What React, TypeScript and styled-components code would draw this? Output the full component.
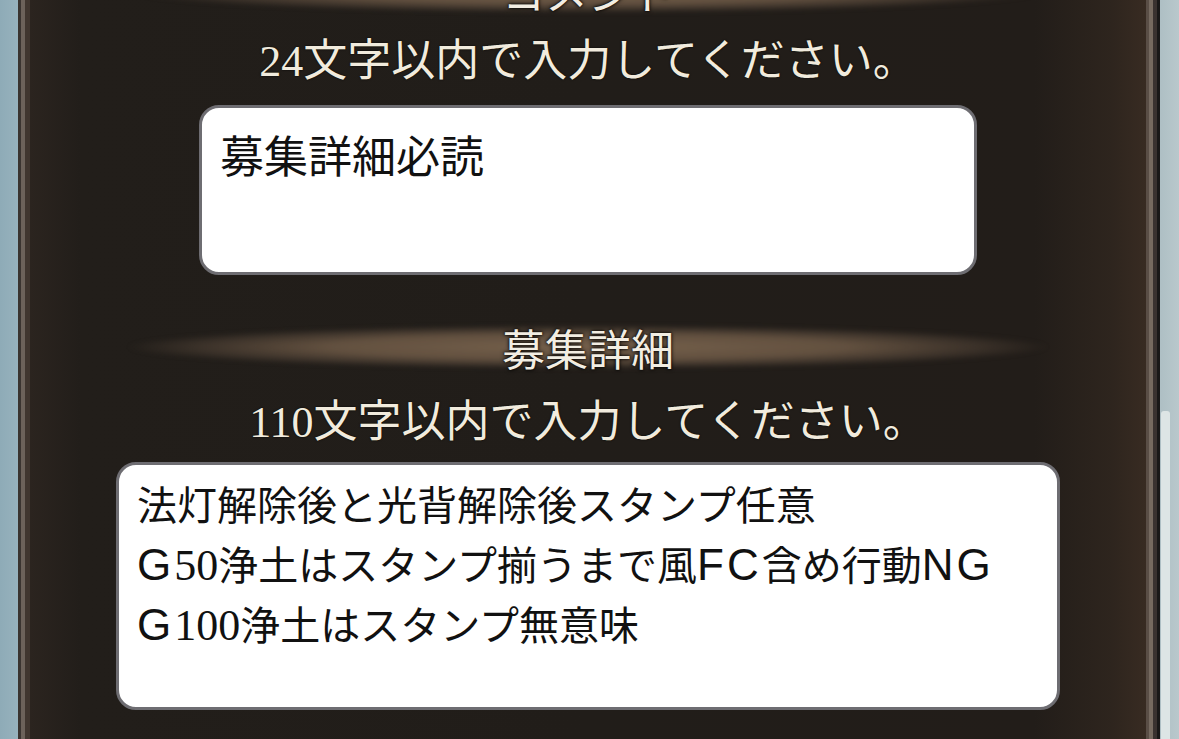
import styled, { createGlobalStyle } from "styled-components";

const GlobalStyle = createGlobalStyle`
  body {
    margin: 0;
    background: #9fb6bf;
  }
`;

const Page = styled.div`
  display: flex;
  width: 1179px;
  height: 739px;
  overflow: hidden;
`;

const LeftGutter = styled.div`
  width: 18px;
  background: linear-gradient(to right, #8eabb7, #97b2bd);
`;

const LeftEdge = styled.div`
  width: 12px;
  background: linear-gradient(
    to right,
    #3a3430 0 3px,
    #6c625a 3px 7px,
    #40362f 7px 12px
  );
`;

const RightEdge = styled.div`
  width: 14px;
  background: linear-gradient(
    to right,
    #5a4e46 0 3px,
    #766a60 3px 7px,
    #3a3230 7px 11px,
    #1a1818 11px 14px
  );
`;

const ScrollTrack = styled.div`
  width: 19px;
  padding-top: 411px;
  box-sizing: border-box;
  background: linear-gradient(to right, #aebfc4, #b9c8cc);
`;

const ScrollThumb = styled.div`
  width: 9px;
  height: 100%;
  margin-left: 1px;
  background: #dde5e5;
  border-radius: 3px 3px 0 0;
`;

const Panel = styled.main`
  flex: 1;
  display: flex;
  flex-direction: column;
  align-items: center;
  background: linear-gradient(
    to right,
    #2b241f 0,
    #221e1a 50px,
    #211d19 50%,
    #221d19 90%,
    #2e251e 97%,
    #382b22 100%
  );
  font-family: "Liberation Serif", "Noto Sans CJK JP", serif;
`;

const Column = styled.div`
  display: flex;
  flex-direction: column;
  align-items: center;
  margin-top: -37px;
`;

const Heading = styled.h2<{ $gap?: number }>`
  position: relative;
  width: 920px;
  height: 56px;
  margin: ${(p) => p.$gap ?? 0}px 0 0;
  text-align: center;
  line-height: 56px;
  font-family: "Noto Sans CJK JP", sans-serif;
  font-size: 43px;
  font-weight: 400;
  color: #f2ede2;
  text-shadow: 0 0 4px #000, 0 0 2px #000;

  &::before {
    content: "";
    position: absolute;
    left: 0;
    right: 0;
    top: 6px;
    height: 44px;
    border-radius: 50%;
    background: radial-gradient(
      ellipse at center,
      rgba(118, 97, 76, 1) 0%,
      rgba(104, 85, 67, 0.92) 40%,
      rgba(76, 63, 52, 0.6) 60%,
      rgba(40, 34, 30, 0) 71%
    );
    filter: blur(2px);
    z-index: 0;
  }

  span {
    position: relative;
    z-index: 1;
  }
`;

const Hint = styled.p<{ $gap: number }>`
  margin: ${(p) => p.$gap}px 0 0;
  height: 48px;
  line-height: 48px;
  font-size: 44px;
  color: #f1ebdd;
  text-shadow: 0 0 2px #000;
  white-space: nowrap;
`;

const Field = styled.div<{ $width: number; $height: number; $gap: number; $size: number; $line: number; $pad: number }>`
  box-sizing: border-box;
  width: ${(p) => p.$width}px;
  height: ${(p) => p.$height}px;
  margin-top: ${(p) => p.$gap}px;
  padding: ${(p) => p.$pad}px 18px 0;
  background: #fff;
  border: 3px solid #6e6d72;
  border-radius: 20px;
  font-family: "Noto Sans CJK JP", sans-serif;
  font-size: ${(p) => p.$size}px;
  line-height: ${(p) => p.$line}px;
  color: #111;
  white-space: nowrap;
`;

const Line = styled.div`
  height: 60px;
`;

// latin letters in the entry text are a wide grotesque, digits a serif
const Latin = styled.span`
  font-family: "Liberation Sans", sans-serif;
  font-size: 44px;
  line-height: 1;
  letter-spacing: 3px;
`;

const Num = styled.span`
  font-family: "Liberation Serif", serif;
  font-size: 44px;
  line-height: 1;
`;

export default function App() {
  return (
    <>
      <GlobalStyle />
      <Page>
        <LeftGutter />
        <LeftEdge />
        <Panel>
          <Column>
            <Heading>
              <span>コメント</span>
            </Heading>
            <Hint $gap={19}>24文字以内で入力してください。</Hint>
            <Field $width={778} $height={170} $gap={19} $size={44} $line={66} $pad={13}>
              募集詳細必読
            </Field>

            <Heading $gap={44}>
              <span>募集詳細</span>
            </Heading>
            <Hint $gap={24}>110文字以内で入力してください。</Hint>
            <Field $width={944} $height={248} $gap={15} $size={40} $line={60} $pad={8}>
              <Line>法灯解除後と光背解除後スタンプ任意</Line>
              <Line>
                <Latin>G</Latin>
                <Num>50</Num>浄土はスタンプ揃うまで風<Latin>FC</Latin>含め行動<Latin>NG</Latin>
              </Line>
              <Line>
                <Latin>G</Latin>
                <Num>100</Num>浄土はスタンプ無意味
              </Line>
            </Field>
          </Column>
        </Panel>
        <RightEdge />
        <ScrollTrack>
          <ScrollThumb />
        </ScrollTrack>
      </Page>
    </>
  );
}
